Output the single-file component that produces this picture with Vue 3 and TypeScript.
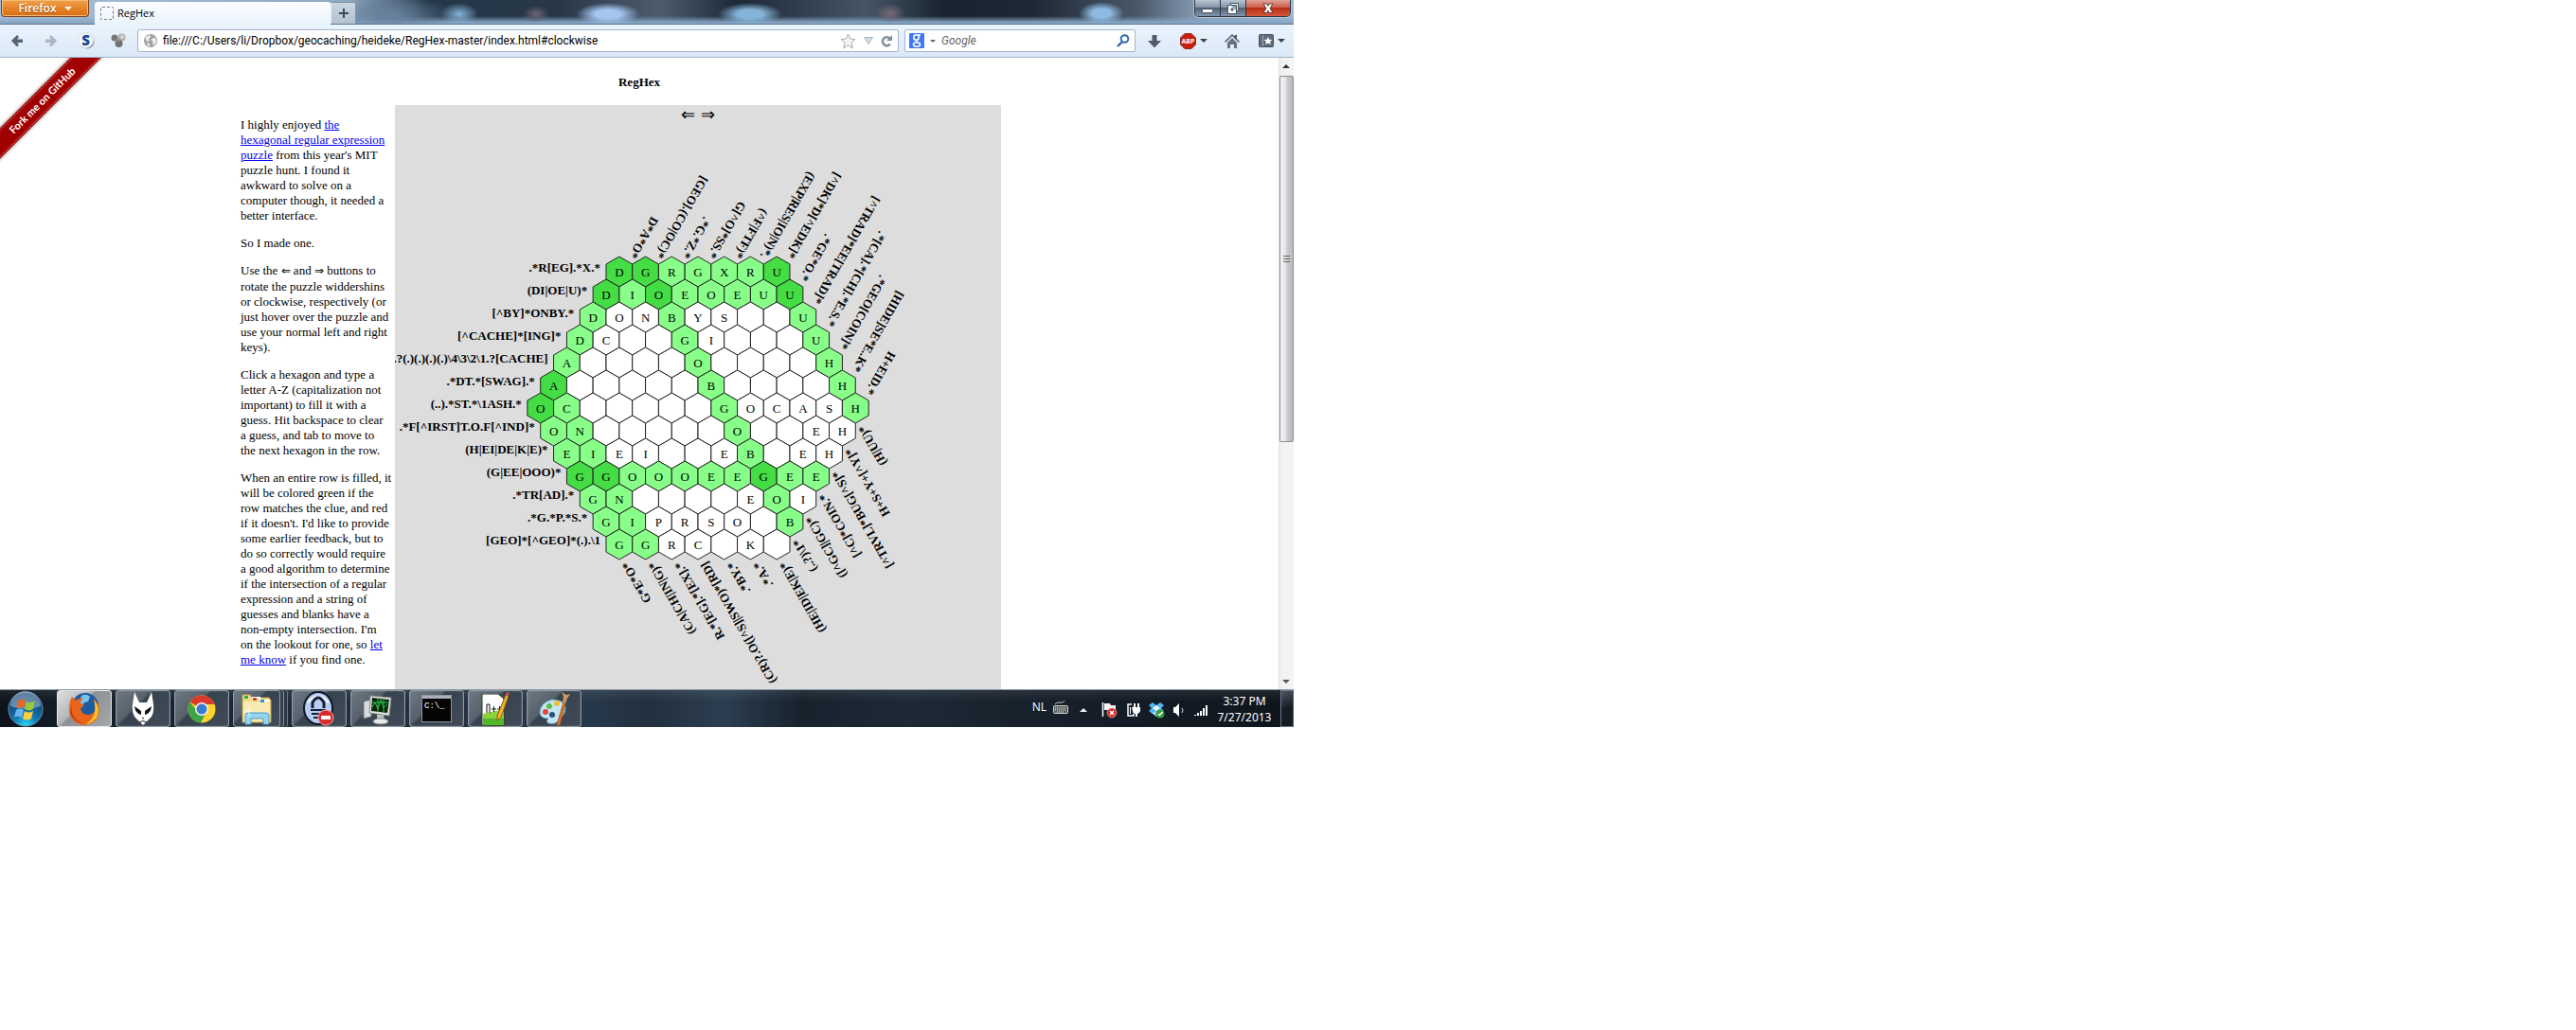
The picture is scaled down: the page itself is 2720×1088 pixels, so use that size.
<script setup lang="ts">
import { ref } from 'vue'

type Tone = 'w' | 'g' | 'd'
interface Cell { letter: string; tone: Tone; x: number; y: number; points: string }
interface Clue { text: string; x: number; y: number }

const SIDE = 16
const HALF = (SIDE * Math.sqrt(3)) / 2
const CENTER = 320

// Each cell is a letter (or _) followed by its tone: w empty, g one match, d two matches.
const rows: string[] = [
  'Dd Gd Rg Gg Xg Rg Ud',
  'Dd Ig Od Eg Og Eg Ug Ud',
  'Dg Ow Nw Bg Yw Sw _w _w Ug',
  'Dg Cw _w _w Gg Iw _w _w _w Ug',
  'Ag _w _w _w _w Og _w _w _w _w Hg',
  'Ad _w _w _w _w _w Bg _w _w _w _w Hg',
  'Od Cg _w _w _w _w _w Gg Ow Cw Aw Sw Hg',
  'Og Ng _w _w _w _w _w Og _w _w Ew Hw',
  'Eg Ig Ew Iw _w _w Ew Bg _w Ew Hw',
  'Gd Gd Og Og Og Eg Eg Gd Eg Eg',
  'Gg Ng _w _w _w _w Ew Og Iw',
  'Gg Ig Pw Rw Sw Ow _w Bg',
  'Gg Gg Rw Cw _w Kw _w',
]

const clues: string[][] = [
  ['.*R[EG].*X.*', '(DI|OE|U)*', '[^BY]*ONBY.*', '[^CACHE]*[ING]*', '[CACHE].?(.)(.)(.)(.)\\4\\3\\2\\1.?[CACHE]', '.*DT.*[SWAG].*', '(..).*ST.*\\1ASH.*', '.*F[^IRST]T.O.F[^IND]*', '(H|EI|DE|K|E)*', '(G|EE|OOO)*', '.*TR[AD].*', '.*G.*P.*S.*', '[GEO]*[^GEO]*(.).\\1'],
  ['H+EID.*', '[HIDE]SE*E..K*', '.*GEO[COIN]*', '.*[CA].*[CH].*E.S.*', '[^TRAD]*EE[TRAD]*', '.*GE*O.*', '[^DK]*D[^EDK]*', '(EXP|RES|IO|N)*.', '(^F|FTF)*', 'G[^O]*SS.*', '.*G.*Z.*', '[GEO].(CO|OC)*', 'D*A*O*'],
  ['G*E*O*', '(CA|CH|IN|G)*', 'R.*[EG].*[EX].*', '(CR)?.O([^S]|SWO)*[RD]', '.*BY.*', '.*A.*', '(HE|ID|EK|E)*', '(..?)\\1*', '([^GC]|GC)*', '[^C]*COIN.*', '[^TRVL]*BUG[^S]*', 'H+S+Y+[^Y]*', '(H|UU)*'],
]

const rowY = (r: number): number => CENTER + (r - 6) * SIDE * 1.5
const rowLeft = (r: number): number => CENTER - rows[r].split(' ').length * HALF

const cells: Cell[] = rows.flatMap((row, r) =>
  row.split(' ').map((code, c) => {
    const x = rowLeft(r) + HALF * (2 * c + 1)
    const y = rowY(r)
    const corners = [[0, -16], [HALF, -8], [HALF, 8], [0, 16], [-HALF, 8], [-HALF, -8]]
    return {
      letter: code[0] === '_' ? '' : code[0],
      tone: code[1] as Tone,
      x,
      y,
      points: corners.map(([dx, dy]) => `${(x + dx).toFixed(2)},${y + dy}`).join(' '),
    }
  }),
)

const sides: Clue[][] = clues.map((list) =>
  list.map((text, r) => ({ text, x: rowLeft(r) - 6, y: rowY(r) })),
)

const url = ref('file:///C:/Users/li/Dropbox/geocaching/heideke/RegHex-master/index.html#clockwise')
const query = ref('')
</script>

<template>
  <div class="desktop">
    <header class="titlebar">
      <button class="firefox">Firefox <i class="caret white"></i></button>
      <div class="tab"><span class="favicon"></span>RegHex</div>
      <button class="newtab" aria-label="New tab">
        <svg width="12" height="12" viewBox="0 0 12 12"><path d="M5 1h2v4h4v2H7v4H5V7H1V5h4z" fill="#3d4a57" /></svg>
      </button>
      <div class="winbtns">
        <button class="min" aria-label="Minimize"><svg width="14" height="14" viewBox="0 0 14 14"><rect x="1.500" y="7.500" width="11" height="4" rx="1" fill="#fff" stroke="#47525e" /></svg></button>
        <button class="max" aria-label="Restore"><svg width="14" height="14" viewBox="0 0 14 14"><path d="M4.500 1.500h8v8h-2v3h-9v-9h3z" fill="#fff" stroke="#47525e" /><path d="M4.500 3.500h6v6M5 7h2v2H5z" fill="#8fa0b2" stroke="#47525e" /></svg></button>
        <button class="close" aria-label="Close"><svg width="14" height="14" viewBox="0 0 14 14"><path d="M2 2h3.500L7 4.300 8.500 2H12L9 6.800l3 4.700H8.500L7 9.200l-1.500 2.300H2l3-4.700z" fill="#fff" stroke="#5d3a3c" /></svg></button>
      </div>
    </header>

    <nav class="toolbar">
      <button class="tool back" aria-label="Back"><svg width="16" height="16" viewBox="0 0 16 16"><path d="M2 8l6-6 2 2-2 2.500h6v3.500H8l2 2-2 2.500z" fill="#55626f" /></svg></button>
      <button class="tool forward" aria-label="Forward"><svg width="16" height="16" viewBox="0 0 16 16"><path d="M14 8L8 2 6 4l2 2.500H2V10h6l-2 2 2 2.500z" fill="#aab6c2" /></svg></button>
      <button class="tool stylish" aria-label="Stylish">
        <svg width="18" height="18" viewBox="0 0 18 18"><circle cx="10" cy="10" r="7.500" fill="#8b95a1" /><circle cx="8.500" cy="8.500" r="8" fill="#f6f7f9" stroke="#d5dae0" /><text x="8.500" y="14" text-anchor="middle" font-family="Open Sans, sans-serif" font-weight="800" font-size="15" fill="#154891">S</text></svg>
      </button>
      <button class="tool cluster" aria-label="Add-on">
        <svg width="16" height="16" viewBox="0 0 16 16"><circle cx="4" cy="5" r="3.500" fill="#777" /><circle cx="11.500" cy="4.500" r="4" fill="#b2b2b2" /><circle cx="12" cy="4" r="2" fill="#d8d8d8" /><circle cx="8.500" cy="11" r="4" fill="#707070" /><circle cx="7.500" cy="7" r="2" fill="#949494" /></svg>
      </button>

      <div class="field urlbar">
        <svg class="globe" width="14" height="14" viewBox="0 0 14 14"><circle cx="7" cy="7" r="7" fill="#a2a2a2" /><path d="M2 3l4-2 1 2-2 2 1 2-2 1-2-2zM8 5l4-1 1 4-2 4-2-2 1-2-2-1zM3 9l3 1v3l-2-1z" fill="#f0f0f0" /></svg>
        <input v-model="url" type="text" aria-label="Address">
        <svg width="17" height="17" viewBox="0 0 17 17"><path d="M8.500 1l2.200 5 5.300.5-4 3.700 1.200 5.600-4.700-2.900-4.700 2.900L5 10.200 1 6.500 6.300 6z" fill="#f4f4f4" stroke="#a9a9a9" /></svg>
        <svg width="10" height="8" viewBox="0 0 10 8"><path d="M.5.500h9L5 7.500z" fill="#d5dde6" stroke="#a9b4bf" /></svg>
        <svg width="13" height="13" viewBox="0 0 13 13"><path d="M9.500 3.500A4.500 4.500 0 1 0 10 9.500" fill="none" stroke="#82909e" stroke-width="2.500" /><path d="M12 0v6H6z" fill="#82909e" /></svg>
      </div>

      <div class="field search">
        <svg width="16" height="16" viewBox="0 0 16 16"><rect width="16" height="16" rx="1" fill="#3f78f4" /><g fill="none" stroke="#fff" stroke-width="1.600"><circle cx="7.500" cy="4.500" r="2.700" /><path d="M9 2h3M8.500 7c-2 1.500-1 2 .5 3" /><ellipse cx="8" cy="12" rx="3.500" ry="2.200" /></g></svg>
        <i class="caret grey"></i>
        <input v-model="query" type="text" placeholder="Google" aria-label="Search">
        <svg width="14" height="14" viewBox="0 0 14 14"><circle cx="8.500" cy="5" r="3.800" fill="none" stroke="#2b6bab" stroke-width="2" /><path d="M6 8l-5 5" stroke="#2b6bab" stroke-width="2.400" /></svg>
      </div>

      <div class="tools">
        <button class="tool" aria-label="Downloads"><svg width="14" height="15" viewBox="0 0 14 15"><path d="M4.500 1h5v6H14l-7 7.500L0 7h4.500z" fill="#4f5b67" /></svg></button>
        <button class="tool abp" aria-label="Adblock Plus"><svg width="17" height="17" viewBox="0 0 17 17"><path d="M5 .5h7L16.500 5v7L12 16.500H5L.5 12V5z" fill="#c81e0c" stroke="#8e2a22" /><text x="8.500" y="11" text-anchor="middle" font-family="Open Sans, sans-serif" font-size="7" font-weight="700" fill="#fff">ABP</text></svg><i class="caret"></i></button>
        <button class="tool home" aria-label="Home"><svg width="16" height="15" viewBox="0 0 16 15"><path d="M8 0l2.500 2.500V1H13v4l3 3-1 1-7-7-7 7-1-1z" fill="#4f5b67" /><path d="M8 4l5 5v6h-3v-4H6v4H3V9z" fill="#66727e" /></svg></button>
        <button class="tool marks" aria-label="Bookmarks"><svg width="16" height="15" viewBox="0 0 16 15"><rect x=".5" y=".5" width="15" height="13" rx="1" fill="#5f6c79" stroke="#46525e" /><path d="M4.500 1v12" stroke="#a2adb8" /><path d="M10 3l1.300 2.700 3 .3-2.200 2 .7 3-2.800-1.600L7.200 11l.7-3-2.200-2 3-.3z" fill="#fff" /></svg><i class="caret"></i></button>
      </div>
    </nav>

    <div class="viewport">
      <main class="page">
        <a class="ribbon" href="#github">Fork me on GitHub</a>
        <h1>RegHex</h1>
        <div class="columns">
          <article>
            <p>I highly enjoyed <a href="#puzzle">the<br>hexagonal regular expression<br>puzzle</a> from this year's MIT<br>puzzle hunt. I found it<br>awkward to solve on a<br>computer though, it needed a<br>better interface.</p>
            <p>So I made one.</p>
            <p>Use the <span class="arrow">⇐</span> and <span class="arrow">⇒</span> buttons to<br>rotate the puzzle widdershins<br>or clockwise, respectively (or<br>just hover over the puzzle and<br>use your normal left and right<br>keys).</p>
            <p>Click a hexagon and type a<br>letter A-Z (capitalization not<br>important) to fill it with a<br>guess. Hit backspace to clear<br>a guess, and tab to move to<br>the next hexagon in the row.</p>
            <p>When an entire row is filled, it<br>will be colored green if the<br>row matches the clue, and red<br>if it doesn't. I'd like to provide<br>some earlier feedback, but to<br>do so correctly would require<br>a good algorithm to determine<br>if the intersection of a regular<br>expression and a string of<br>guesses and blanks have a<br>non-empty intersection. I'm<br>on the lookout for one, so <a href="#contact">let<br>me know</a> if you find one.</p>
          </article>
          <section class="board">
            <div class="rotate"><button aria-label="Rotate widdershins">⇐</button><button aria-label="Rotate clockwise">⇒</button></div>
            <svg width="640" height="640" viewBox="0 0 640 640">
              <g v-for="cell in cells" :key="cell.points">
                <polygon :points="cell.points" :class="['hex', cell.tone]" />
                <text :x="cell.x" :y="cell.y + 5" class="letter">{{ cell.letter }}</text>
              </g>
              <g v-for="(side, k) in sides" :key="k" class="side" :transform="`rotate(${k * 120} 320 320)`">
                <text v-for="clue in side" :key="clue.text" :x="clue.x" :y="clue.y">{{ clue.text }}</text>
              </g>
            </svg>
          </section>
        </div>
      </main>
      <div class="scrollbar">
        <i class="up"></i>
        <div class="thumb"><i></i><i></i><i></i></div>
        <i class="down"></i>
      </div>
    </div>

    <footer class="taskbar">
      <button class="orb" aria-label="Start">
        <svg width="40" height="40" viewBox="0 0 40 40">
          <defs><radialGradient id="orb" cx=".5" cy="1" r=".9"><stop offset="0" stop-color="#27e0ff" /><stop offset=".4" stop-color="#1377b4" /><stop offset="1" stop-color="#113a66" /></radialGradient></defs>
          <circle cx="20" cy="20" r="18" fill="url(#orb)" stroke="#6e93ad" />
          <path d="M4 17a16 16 0 0 1 32 0q-16 6-32 0z" fill="#c2dced" opacity=".45" />
          <path d="M12 11q4-3 8 0l-2 8q-4-2-8 0z" fill="#e8662a" /><path d="M21 12q4 3 9-1l-2 9q-4 3-9 0z" fill="#9ac83c" />
          <path d="M10 21q4-3 8 0l-2 8q-4-3-8 0z" fill="#68b4ee" /><path d="M19 22q4 3 9 0l-2 8q-4 3-9 0z" fill="#fdce3c" />
        </svg>
      </button>
      <button class="task active" aria-label="Firefox">
        <svg width="34" height="36" viewBox="0 0 34 36">
          <circle cx="18" cy="15" r="14" fill="#1d5a9e" /><path d="M14 4q5-3 9 1l-2 5-4 1-2 4-4-2z" fill="#7bc4ee" />
          <path d="M4 5l4 4q3-3 8-2-4 3-3 5l4 1q-1 3-4 4 1 6 7 7 7 0 9-6 1-7-4-12 7 4 8 12 0 15-16 17Q1 33 1 18 1 10 4 5z" fill="#e8641b" />
          <path d="M27 8q7 8 4 17-4 8-13 9 9-5 10-13 1-7-1-13z" fill="#fbc22b" /><path d="M4 12q-3 16 12 21-11-1-14-11z" fill="#c43b12" />
        </svg>
      </button>
      <button class="task" aria-label="foobar2000">
        <svg width="24" height="36" viewBox="0 0 24 36"><path d="M3 0l5 11h8l5-11 2 13q1 8-2 13l-9 9-9-9Q0 21 1 13z" fill="#fff" /><path d="M3 15l7 5v4q-6-1-7-9zM21 15l-7 5v4q6-1 7-9zM11 27h2l-1 2z" fill="#111" /><path d="M8 32q4-3 8 0" fill="none" stroke="#222" /></svg>
      </button>
      <button class="task" aria-label="Chrome">
        <svg width="30" height="34" viewBox="0 0 30 34"><circle cx="15" cy="17" r="14.500" fill="#fdd22c" /><path d="M15 17L2.500 9.500A14.500 14.500 0 0 1 28.500 12H15z" fill="#dc3a2c" /><path d="M2.500 9.500A14.500 14.500 0 0 0 14 31.500L20 20l-9 0z" fill="#3fa447" /><circle cx="15" cy="17" r="7" fill="#f5f5f5" /><circle cx="15" cy="17" r="5.500" fill="#3b7bd0" /></svg>
      </button>
      <button class="task stack" aria-label="Explorer">
        <svg width="34" height="36" viewBox="0 0 34 36"><path d="M2 3h8l2 3h18l2 3v23H2z" fill="#f1dc8b" stroke="#c9a94f" /><path d="M3 10h28v21H3z" fill="#f8eab0" /><path d="M12 6h8l2 3h9" fill="none" stroke="#fff" stroke-width="2" /><rect x="4" y="4" width="4" height="3" fill="#2eb14c" /><rect x="13" y="6" width="4" height="3" fill="#d8432d" /><rect x="21" y="8" width="4" height="3" fill="#2f8de0" /><path d="M5 34V25q0-3 4-3h17q4 0 4 3v9h-6v-6H11v6z" fill="#96d4ef" stroke="#4d9ec6" /><path d="M9 14v12M3 20h12" stroke="#fff" opacity=".8" /></svg>
      </button>
      <button class="task" aria-label="KeePass">
        <svg width="34" height="38" viewBox="0 0 34 38"><ellipse cx="16" cy="18" rx="15" ry="17" fill="#b8cdf6" stroke="#101820" stroke-width="2" /><path d="M5 12q10-12 22 0" fill="none" stroke="#e9f0ff" stroke-width="3" /><path d="M10 18v-6q6-10 12 0v6" fill="none" stroke="#172033" stroke-width="3" /><path d="M8 19h16v2H8zM9 23h12v2H9zM11 27h8v2h-8z" fill="#172033" /><circle cx="24" cy="28" r="8" fill="#d92d2d" stroke="#f2a0a0" /><rect x="19" y="26" width="10" height="4" fill="#fff" /></svg>
      </button>
      <button class="task" aria-label="Monitor">
        <svg width="34" height="36" viewBox="0 0 34 36"><path d="M2 10l8-2v18l-8 2z" fill="#d8dcdd" stroke="#777" /><path d="M9 4l22 2-2 19-21-3z" fill="#dfe3e0" stroke="#8a8f8e" /><path d="M11 6l18 2-2 14-17-2z" fill="#0b260f" /><path d="M11 16l3-5 3 7 3-10 3 9 4-4M11 11h17M17 7v14M23 8v13" fill="none" stroke="#2fc048" /><path d="M16 24h7l1 5h-8z" fill="#b9bdbd" /><ellipse cx="20" cy="31" rx="8" ry="3" fill="#e8eaea" stroke="#888" /></svg>
      </button>
      <button class="task" aria-label="Command prompt">
        <svg width="32" height="30" viewBox="0 0 32 30"><rect x=".5" y=".5" width="31" height="28" fill="#050505" stroke="#8d949b" /><rect x="1" y="1" width="30" height="3" fill="#aab0b7" /><text x="3" y="14" font-family="Liberation Mono, monospace" font-size="9" fill="#fff">C:\_</text></svg>
      </button>
      <button class="task" aria-label="Notepad++">
        <svg width="32" height="38" viewBox="0 0 32 38"><path d="M2 3h17l6 5v28H2z" fill="#fff" stroke="#2b3b20" /><path d="M3 24l22-5v17H3z" fill="#8ed13e" /><path d="M3 29h22v7H3z" fill="#3cac20" opacity=".7" /><path d="M3 3h16" stroke="#888" stroke-width="2" stroke-dasharray="1 1" /><path d="M7 23v-9h3v9M12 19h5M14.500 16v6M18 19h5M20.500 16v6" stroke="#111" fill="none" /><path d="M18 26L27 4l3 1-8 23-4 3z" fill="#f0b32e" stroke="#8d5c16" /><path d="M27 4l1-3 3 1-1 3z" fill="#d24854" /></svg>
      </button>
      <button class="task" aria-label="Paint">
        <svg width="34" height="38" viewBox="0 0 34 38"><path d="M2 22Q3 12 15 9q12 0 14 8 0 8-6 12-3 7-12 5-3-2 0-5-9 0-9-7z" fill="#c4e5f4" stroke="#72a8c5" /><circle cx="8" cy="22" r="3" fill="#e0453a" /><circle cx="12" cy="16" r="3" fill="#5ac045" /><circle cx="20" cy="13" r="3" fill="#f3bd35" /><circle cx="15" cy="25" r="3" fill="#28517a" /><path d="M20 36l7-24 2 1-6 23z" fill="#e17b26" stroke="#a75218" /><path d="M26 12l1-6-2-5 5 3 4-1-3 5-2 5z" fill="#c79664" /></svg>
      </button>

      <div class="tray">
        <span class="lang">NL</span>
        <svg class="kbd" width="16" height="16" viewBox="0 0 16 16"><path d="M2 5q1-2 5-2 4 1 5-2" fill="none" stroke="#c9c9c0" /><rect x=".5" y="6.500" width="15" height="8" rx="1" fill="#5d605e" stroke="#d6d6ce" /><path d="M2 9h12M2 11h12M4 13h8" stroke="#e6e6de" stroke-dasharray="1 1" /></svg>
        <i class="expand"></i>
        <svg width="18" height="18" viewBox="0 0 18 18"><path d="M2.500 1v15" stroke="#fff" stroke-width="1.500" /><path d="M4 2h6l1 2h5v7H9L8 9H4z" fill="#f4f4f4" /><circle cx="12" cy="12" r="5" fill="#d62828" stroke="#f1b0a8" stroke-width=".7" /><path d="M10 10l4 4M14 10l-4 4" stroke="#fff" stroke-width="1.700" /></svg>
        <svg width="18" height="18" viewBox="0 0 18 18"><path d="M8 3H4v12h6v-2" fill="none" stroke="#fff" stroke-width="1.500" /><path d="M8 6h9v4q-1 3-3 3v3h-2v-3q-3 0-3-3zM10 2h2v4h-2zM14 2h2v4h-2z" fill="#fff" /><path d="M6.500 6v7" stroke="#fff" /></svg>
        <svg width="18" height="18" viewBox="0 0 18 18"><path d="M1 4l4-3 4 3 4-3 4 3-3 3 3 3-4 3-4-3-4 3-4-3 3-3z" fill="#55b4f3" /><path d="M5 7l4-3 4 3-4 3z" fill="#e8f5fe" /><path d="M4 12l5 4 4-3-4-3z" fill="#9ed5f8" /><circle cx="13" cy="13" r="4.500" fill="#34a03a" /><path d="M11 13l1.500 1.500L15.500 11" fill="none" stroke="#fff" stroke-width="1.400" /></svg>
        <svg width="16" height="16" viewBox="0 0 16 16"><path d="M2 5h2l4-4v14l-4-4H2z" fill="#fff" /><path d="M11 6q2 2 0 5" fill="none" stroke="#dfe5ea" /></svg>
        <svg width="16" height="14" viewBox="0 0 16 14"><path d="M1 12h2v1H1zM4 10h2v3H4zM7 8h2v5H7zM10 5h2v8h-2zM13 2h2v11h-2z" fill="#fff" /></svg>
      </div>
      <div class="clock"><time>3:37 PM</time><time>7/27/2013</time></div>
      <button class="showdesktop" aria-label="Show desktop"></button>
    </footer>
  </div>
</template>

<style>
body { background: #fff; }
</style>

<style scoped>
* { box-sizing: border-box; }
button { margin: 0; padding: 0; border: 0; background: none; font: inherit; color: inherit; display: flex; align-items: center; justify-content: center; flex: none; }
svg { display: block; flex: none; }
input { border: 0; outline: 0; padding: 0; background: none; min-width: 0; flex: 1; color: #000; font: inherit; }

.desktop { width: calc(50vw + 6px); height: calc(75vh - 48px); display: flex; flex-direction: column; overflow: hidden; background: #fff; font: 12px/16px "Open Sans", "Noto Sans", sans-serif; }

/* Title bar */
.titlebar { flex: none; height: 26px; display: flex; align-items: flex-start; border-bottom: 1px solid #5f7690; background:
  radial-gradient(ellipse 20px 12px at 485px 15px, #86b4dc, transparent),
  radial-gradient(ellipse 14px 9px at 566px 15px, #6d6475, transparent),
  radial-gradient(ellipse 34px 12px at 642px 15px, #a3c6ef 40%, transparent),
  radial-gradient(ellipse 34px 12px at 792px 15px, #85b4d8 40%, transparent),
  radial-gradient(ellipse 16px 10px at 940px 14px, #7b6a7b, transparent),
  radial-gradient(ellipse 24px 12px at 1163px 14px, #8dbbe2 40%, transparent),
  radial-gradient(ellipse 70px 20px at 410px 16px, #68829e, transparent),
  linear-gradient(180deg, transparent 68%, #87a6c6 96%),
  linear-gradient(90deg, #a7bfd8 0, #8fa8c2 27%, #25384a 33%, #273748 43%, #4c5c6d 51%, #1c2937 57%, #465565 67%, #17232f 73%, #1e2936 80%, #4a5869 88%, #8ba2ba 93%, #9eb6cf 100%); }
.firefox { width: 93px; height: 18px; margin: 0 6px 0 1px; gap: 8px; border: 1px solid #7e401b; border-top: 0; border-radius: 0 0 4px 4px; background: linear-gradient(#f0a24a, #e58227 55%, #dc6c12); box-shadow: inset 0 0 0 1px #f7bd7c; color: #fff; font-weight: 600; text-shadow: 0 1px 1px #84410e; }
.tab { width: 249px; height: 24px; margin-top: 2px; padding: 1px 6px; display: flex; align-items: center; gap: 4px; background: linear-gradient(#fbfdff, #e9f3fc); border-radius: 3px 3px 0 0; color: #000; font-size: 11px; }
.favicon { width: 14px; height: 14px; border: 1px dashed #777; border-radius: 2px; }
.newtab { width: 27px; height: 23px; margin-top: 2px; border: 1px solid #7f93a6; border-bottom: 0; border-left-color: #e4edf4; background: linear-gradient(#c9d6e1, #b3c2ce); }
.winbtns { margin: 0 3px 0 auto; height: 18px; display: flex; border: 1px solid #2b3540; border-top: 0; border-radius: 0 0 5px 5px; overflow: hidden; box-shadow: 0 0 0 1px #b4c4d4; }
.winbtns button { width: 27px; background: linear-gradient(#b9c6d3, #8294a7 45%, #506376 50%, #8297ad); border-right: 1px solid #2b3540; }
.winbtns .close { width: 46px; border: 0; background: linear-gradient(#e0a497, #cf5e4b 45%, #b92d15 50%, #d4593a); }

/* Navigation toolbar */
.toolbar { flex: none; height: 35px; padding: 0 8px; display: flex; align-items: center; background: linear-gradient(#eaf4fd, #dae8f7); border-bottom: 1px solid #9db4cc; font-family: Roboto, "Open Sans", sans-serif; }
.tool { height: 18px; }
.back { margin-left: 2px; }
.forward { margin-left: 20px; }
.stylish { margin-left: 20px; }
.cluster { margin: 0 12px 0 17px; }
.field { height: 24px; display: flex; align-items: center; background: #fff; border: 1px solid #a3b5c9; border-radius: 2px; }
.urlbar { flex: 1; padding: 0 5px 0 6px; gap: 8px; }
.globe { margin-right: -2px; }
.search { width: 244px; margin-left: 6px; padding: 0 5px 0 4px; gap: 6px; }
.search input { font-style: italic; }
.search input::placeholder { color: #666; opacity: 1; }
.caret { width: 0; height: 0; border: 4px solid transparent; border-top-color: #3b444d; border-bottom: 0; flex: none; }
.caret.white { border-top-color: #fff; }
.caret.grey { border-width: 3px; border-bottom: 0; border-top-color: #666; }
.tools { display: flex; align-items: center; margin-left: 13px; }
.tools .caret { margin-left: 4px; }
.abp { margin-left: 20px; }
.home { margin-left: 18px; }
.marks { margin: 0 1px 0 20px; }

/* Web page */
.viewport { flex: 1; min-height: 0; display: flex; overflow: hidden; font: 13px/16px "Liberation Serif", serif; color: #000; }
.page { position: relative; flex: 1; overflow: hidden; }
h1 { margin: 18px 0 16px; text-align: center; font-size: 13px; line-height: 16px; }
.columns { display: flex; justify-content: center; align-items: flex-start; padding-right: 39px; }
article { width: 163px; flex: none; white-space: nowrap; }
p { margin: 13px 0; }
a { color: #00e; }
.arrow { font-size: 12px; line-height: 17px; }
.board { position: relative; flex: none; background: #ddd; }
.rotate { position: absolute; top: 0; left: 0; right: 0; display: flex; justify-content: center; gap: 6px; font-size: 18px; line-height: 20px; }
.hex { stroke: #222; stroke-width: 1; fill: #fff; }
.hex.g { fill: #8f8; }
.hex.d { fill: #4d4; }
.letter { text-anchor: middle; font-size: 13px; }
.side { text-anchor: end; font-size: 13px; font-weight: bold; }
.ribbon { position: absolute; z-index: 1; top: 34px; left: -55px; width: 200px; height: 23px; transform: rotate(-45deg); background: #a00000; outline: 1px dotted #d88; outline-offset: -2px; box-shadow: 0 0 4px rgba(0, 0, 0, .5); color: #fff; font: 700 11px/22px Lato, sans-serif; text-align: center; text-decoration: none; }
.scrollbar { width: 16px; flex: none; display: flex; flex-direction: column; align-items: center; background: linear-gradient(90deg, #e4e4e4, #f2f2f2 20%, #f4f4f4); }
.up, .down { flex: none; width: 0; height: 0; border: 4px solid transparent; }
.up { margin: 7px 0 8px; border-top: 0; border-bottom-color: #333; }
.down { margin: auto 0 6px; border-bottom: 0; border-top-color: #555; }
.thumb { width: 15px; height: 58%; border: 1px solid #8b8b8b; border-radius: 2px; display: flex; flex-direction: column; align-items: center; justify-content: center; gap: 2px; background: linear-gradient(90deg, #f5f5f5, #e3e3e6 45%, #c9c9ce 55%, #b8b8be); }
.thumb i { width: 7px; height: 1px; background: #666; }

/* Taskbar */
.taskbar { flex: none; height: 40px; display: flex; align-items: stretch; border-top: 1px solid #8795a3; background: linear-gradient(rgba(255, 255, 255, .08), transparent 30%), linear-gradient(90deg, #0c131b 0, #131c26 4%, #1f2d3b 25%, #27384a 46%, #22303f 50%, #2c3e50 56%, #17222d 62%, #1d2a36 70%, #18222d 78%, #0e151d 100%); color: #fff; }
.orb { width: 40px; margin: 0 13px 0 7px; }
.task { width: 58px; margin-right: 4px; border: 1px solid #8d98a2; border-radius: 3px; background: linear-gradient(135deg, #6d7882 0, #56616c 38%, #36424e 42%, #414c58 100%); box-shadow: inset 0 0 1px #bcc6ce; }
.task.active { background: linear-gradient(135deg, #e0e1e3 0, #b2b4b7 40%, #8d9094 44%, #a5a8ab 100%); border-color: #e4e6e8; }
.stack { width: 50px; margin-right: 12px; box-shadow: 3px 0 0 #33404c, 4px 0 0 #84909b, 7px 0 0 #2b3743, 8px 0 0 #6c7883; }
.tray { margin-left: auto; display: flex; align-items: center; gap: 7px; padding-top: 2px; }
.lang { line-height: 16px; padding-bottom: 5px; }
.kbd { margin: 0 5px 5px 0; }
.expand { border: 4px solid transparent; border-top: 0; border-bottom-color: #eee; margin-right: 7px; }
.clock { width: 76px; margin-right: 0; display: flex; flex-direction: column; justify-content: center; text-align: center; line-height: 17px; font-family: "Noto Sans", sans-serif; }
.showdesktop { width: 14px; border: 1px solid #6e7a85; border-right-color: #4c5660; background: linear-gradient(160deg, #4b555f, #151c24 50%); }
</style>
